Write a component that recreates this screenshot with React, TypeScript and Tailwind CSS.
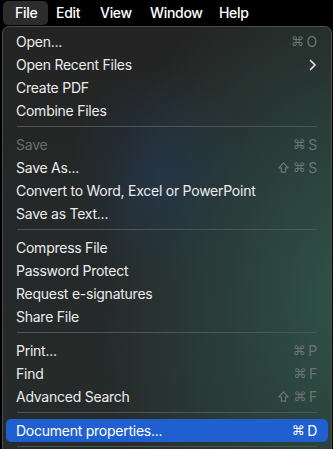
import React from "react";

type Item =
  | { sep: true }
  | { label: string; keys?: string[]; disabled?: boolean; sub?: boolean; active?: boolean };

const items: Item[] = [
  { label: "Open...", keys: ["⌘", "O"] },
  { label: "Open Recent Files", sub: true },
  { label: "Create PDF" },
  { label: "Combine Files" },
  { sep: true },
  { label: "Save", keys: ["⌘", "S"], disabled: true },
  { label: "Save As...", keys: ["⇧", "⌘", "S"] },
  { label: "Convert to Word, Excel or PowerPoint" },
  { label: "Save as Text..." },
  { sep: true },
  { label: "Compress File" },
  { label: "Password Protect" },
  { label: "Request e-signatures" },
  { label: "Share File" },
  { sep: true },
  { label: "Print...", keys: ["⌘", "P"] },
  { label: "Find", keys: ["⌘", "F"] },
  { label: "Advanced Search", keys: ["⇧", "⌘", "F"] },
  { sep: true },
  { label: "Document properties...", keys: ["⌘", "D"], active: true },
  { sep: true },
];

function Shift({ color }: { color: string }) {
  return (
    <svg width="11" height="11" viewBox="0 0 11 11" className="mr-[1px]">
      <path
        d="M5.5 0.8 L10.2 5.8 L7.6 5.8 L7.6 10.2 L3.4 10.2 L3.4 5.8 L0.8 5.8 Z"
        fill="none"
        stroke={color}
        strokeWidth="1.2"
        strokeLinejoin="round"
      />
    </svg>
  );
}

function Keys({ keys, active }: { keys: string[]; active?: boolean }) {
  const color = active ? "#ffffff" : "#6c7573";
  return (
    <div
      className={
        "flex items-center gap-[3px] text-[14px] " +
        (active ? "text-white" : "text-[#6c7573]")
      }
    >
      {keys.map((k, i) =>
        k === "⇧" ? (
          <Shift key={i} color={color} />
        ) : (
          <span
            key={i}
            className={k === "⌘" ? "font-['DejaVu_Sans',sans-serif] text-[13px]" : ""}
          >
            {k}
          </span>
        )
      )}
    </div>
  );
}

export default function App() {
  return (
    <div className="w-[333px] h-[449px] overflow-hidden bg-black font-['Inter','Noto_Sans',sans-serif] text-[14px] leading-none text-[#ececec]">
      <div className="h-[25px] flex items-center text-[14px] font-medium text-white tracking-[-0.3px]">
        <div className="ml-[3px] h-[24px] w-[45px] rounded-[5px] bg-[#2c2c2c] flex items-center pl-[12px]">
          File
        </div>
        <div className="ml-[8px] w-[44px]">Edit</div>
        <div className="w-[50px]">View</div>
        <div className="w-[69px]">Window</div>
        <div>Help</div>
      </div>
      <div className="ml-[2px] mt-[1px] w-[330px] h-[440px] rounded-t-[7px] border border-[#4a4d4c] bg-[radial-gradient(ellipse_90px_110px_at_48%_34%,rgba(35,58,90,0.55),transparent),radial-gradient(ellipse_260px_360px_at_108%_62%,rgba(48,86,76,0.95),transparent),linear-gradient(180deg,#232323_0%,#252828_40%,#262c2b_100%)] px-[3px] pt-[3px] tracking-[-0.25px]">
        {items.map((it, i) =>
          "sep" in it ? (
            <div key={i} className="h-[11px] flex items-start pt-[4px] px-[11px]">
              <div className="h-px w-full bg-[#4e5654]" />
            </div>
          ) : (
            <div
              key={i}
              className={
                "h-[23px] flex items-center justify-between pl-[10px] pr-[11px] rounded-[5px] " +
                (it.active ? "bg-[#1f5fcf] text-white" : "") +
                (it.disabled ? " text-[#6a6d6c]" : "")
              }
            >
              <span>{it.label}</span>
              {it.keys && <Keys keys={it.keys} active={it.active} />}
              {it.sub && (
                <svg width="8" height="12" viewBox="0 0 8 12">
                  <path
                    d="M1.5 1.5 L6 6 L1.5 10.5"
                    fill="none"
                    stroke="#e4e4e4"
                    strokeWidth="1.7"
                    strokeLinecap="round"
                    strokeLinejoin="round"
                  />
                </svg>
              )}
            </div>
          )
        )}
      </div>
    </div>
  );
}
